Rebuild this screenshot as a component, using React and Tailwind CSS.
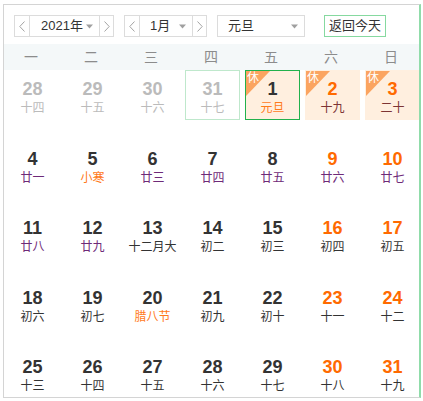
import React from "react";

const CJK = { fontFamily: '"Liberation Sans", "Noto Sans CJK SC", sans-serif' };

const rows = [
  [
    { d: 28, l: "十四", prev: true },
    { d: 29, l: "十五", prev: true },
    { d: 30, l: "十六", prev: true },
    { d: 31, l: "十七", prev: true, hover: true },
    { d: 1, l: "元旦", fest: true, rest: true, sel: true },
    { d: 2, l: "十九", rest: true, wk: true },
    { d: 3, l: "二十", rest: true, wk: true },
  ],
  [
    { d: 4, l: "廿一" },
    { d: 5, l: "小寒", fest: true },
    { d: 6, l: "廿三" },
    { d: 7, l: "廿四" },
    { d: 8, l: "廿五" },
    { d: 9, l: "廿六", wk: true },
    { d: 10, l: "廿七", wk: true },
  ],
  [
    { d: 11, l: "廿八" },
    { d: 12, l: "廿九" },
    { d: 13, l: "十二月大" },
    { d: 14, l: "初二" },
    { d: 15, l: "初三" },
    { d: 16, l: "初四", wk: true },
    { d: 17, l: "初五", wk: true },
  ],
  [
    { d: 18, l: "初六" },
    { d: 19, l: "初七" },
    { d: 20, l: "腊八节", fest: true },
    { d: 21, l: "初九" },
    { d: 22, l: "初十" },
    { d: 23, l: "十一", wk: true },
    { d: 24, l: "十二", wk: true },
  ],
  [
    { d: 25, l: "十三" },
    { d: 26, l: "十四" },
    { d: 27, l: "十五" },
    { d: 28, l: "十六" },
    { d: 29, l: "十七" },
    { d: 30, l: "十八", wk: true },
    { d: 31, l: "十九", wk: true },
  ],
];

function Chevron({ dir }) {
  return (
    <svg width="6" height="11" viewBox="0 0 6 11" fill="none">
      {dir === "l" ? (
        <polyline points="5.5,0.5 0.8,5.5 5.5,10.5" stroke="#9a9a9a" strokeWidth="0.9" />
      ) : (
        <polyline points="0.5,0.5 5.2,5.5 0.5,10.5" stroke="#9a9a9a" strokeWidth="0.9" />
      )}
    </svg>
  );
}

function Caret() {
  return (
    <svg width="7" height="5" viewBox="0 0 7 5">
      <polygon points="0,0.5 7,0.5 3.5,4.5" fill="#a0a0a0" />
    </svg>
  );
}

function Stepper({ label, width, textPad }) {
  return (
    <div className="flex h-[22px] border border-[#dcdcdc] bg-white">
      <div className="flex w-[15px] items-center justify-center border-r border-[#dcdcdc]">
        <Chevron dir="l" />
      </div>
      <div className={`flex items-center justify-between ${width} ${textPad} pr-[6px]`}>
        <span className="text-[13px] text-[#333]">{label}</span>
        <Caret />
      </div>
      <div className="flex w-[14px] items-center justify-center border-l border-[#dcdcdc]">
        <Chevron dir="r" />
      </div>
    </div>
  );
}

function Cell({ c }) {
  let numColor = "text-[#333]";
  if (c.prev) numColor = "text-[#bbbbbb]";
  else if (c.wk) numColor = "text-[#ff6a00]";
  let lunColor = "text-[#333]";
  if (c.prev) lunColor = "text-[#bbbbbb]";
  else if (c.fest) lunColor = "text-[#ff7a1a]";
  else if (c.rest) lunColor = "text-[#7d3434]";
  else if (c.l.startsWith("廿")) lunColor = "text-[#6e2a78]";

  let box = "border border-transparent";
  if (c.sel) box = "border border-[#22b14c]";
  else if (c.hover) box = "border border-[#bfe8cc]";
  const bg = c.rest ? "bg-[#ffefdf]" : "";

  return (
    <div className={`relative flex h-[50px] flex-col items-center pt-[8px] ${box} ${bg}`}>
      {c.rest && (
        <div className="absolute left-0 top-0 h-[25px] w-[24px]">
          <svg width="24" height="25" viewBox="0 0 24 25" className="absolute left-0 top-0">
            <polygon points="0,0 24,0 0,25" fill="#fba460" />
          </svg>
          <span className="absolute left-[1px] top-[0px] text-[12px] leading-[15px] text-white" style={CJK}>
            休
          </span>
        </div>
      )}
      <div className={`relative text-[18px] font-bold leading-[20px] ${numColor}`} style={{ fontFamily: '"Liberation Sans", Arial, sans-serif' }}>
        {c.d}
      </div>
      <div className={`relative mt-[1px] text-[12px] leading-[16px] ${lunColor}`} style={CJK}>
        {c.l}
      </div>
    </div>
  );
}

export default function App() {
  const weeks = ["一", "二", "三", "四", "五", "六", "日"];
  return (
    <div className="h-[401px] w-[423px] bg-white pl-[3px] pt-[4px]" style={CJK}>
      <div className="h-[394px] w-[418px] overflow-hidden border border-[#d4d4d4] border-r-2 border-r-[#90dcaa]">
        <div className="flex items-center pl-[10px] pt-[10px]">
          <Stepper label="2021年" width="w-[69px]" textPad="pl-[11px]" />
          <div className="ml-[10px]">
            <Stepper label="1月" width="w-[52px]" textPad="pl-[10px]" />
          </div>
          <div className="ml-[10px] flex h-[22px] w-[88px] items-center justify-between border border-[#dcdcdc] pl-[10px] pr-[6px]">
            <span className="text-[13px] text-[#333]">元旦</span>
            <Caret />
          </div>
          <div className="ml-[19px] flex h-[22px] w-[62px] items-center justify-center border border-[#86d9a0] text-[13px] text-[#333]">
            返回今天
          </div>
        </div>
        <div className="-ml-[3px] mt-[7px] grid h-[26px] grid-cols-[repeat(7,60px)] bg-[#f4f8f9]">
          {weeks.map((w) => (
            <div key={w} className="flex items-center justify-center text-[14px] text-[#8c8c8c]">
              {w}
            </div>
          ))}
        </div>
        <div className="grid grid-cols-[repeat(7,55px)] gap-x-[5px] gap-y-[19.5px] pl-[1px]">
          {rows.flat().map((c, i) => (
            <Cell key={i} c={c} />
          ))}
        </div>
      </div>
    </div>
  );
}
